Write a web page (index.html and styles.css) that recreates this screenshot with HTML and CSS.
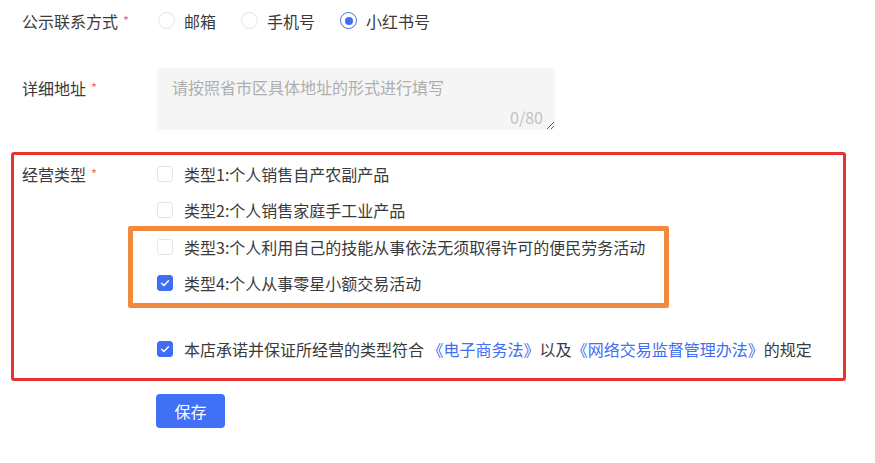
FILE: index.html
```html
<!DOCTYPE html>
<html lang="zh-CN">
<head>
    <meta charset="UTF-8">
    <meta name="viewport" content="width=device-width, initial-scale=1.0">
    <title>店铺信息</title>
    <link rel="stylesheet" href="styles.css">
</head>
<body>
    <div class="page">
        <div class="form-item contact-row">
            <div class="label">公示联系方式<span class="req">*</span></div>
            <div class="radio-group">
                <label class="radio"><span class="radio-dot"></span>邮箱</label>
                <label class="radio"><span class="radio-dot"></span>手机号</label>
                <label class="radio"><span class="radio-dot checked"></span>小红书号</label>
            </div>
        </div>

        <div class="form-item address-row">
            <div class="label">详细地址<span class="req">*</span></div>
            <div class="textarea-wrap">
                <textarea class="textarea" placeholder="请按照省市区具体地址的形式进行填写"></textarea>
                <span class="counter">0/80</span>
            </div>
        </div>

        <div class="form-item type-row">
            <div class="label">经营类型<span class="req">*</span></div>
            <div class="check-list">
                <label class="check"><span class="box"></span>类型1:个人销售自产农副产品</label>
                <label class="check"><span class="box"></span>类型2:个人销售家庭手工业产品</label>
                <label class="check"><span class="box"></span>类型3:个人利用自己的技能从事依法无须取得许可的便民劳务活动</label>
                <label class="check"><span class="box checked"><svg viewBox="0 0 16 16" width="16" height="16"><path d="M4.5 8.2l2.4 2.4 4.6-4.8" fill="none" stroke="#fff" stroke-width="1.4" stroke-linecap="round" stroke-linejoin="round"/></svg></span>类型4:个人从事零星小额交易活动</label>
                <label class="check agree"><span class="box checked"><svg viewBox="0 0 16 16" width="16" height="16"><path d="M4.5 8.2l2.4 2.4 4.6-4.8" fill="none" stroke="#fff" stroke-width="1.4" stroke-linecap="round" stroke-linejoin="round"/></svg></span>本店承诺并保证所经营的类型符合&nbsp;<a class="link" href="#">《电子商务法》</a>以及<a class="link" href="#">《网络交易监督管理办法》</a>的规定</label>
            </div>
        </div>

        <div class="actions">
            <button class="save-button">保存</button>
        </div>

        <!-- annotation frames drawn over the form -->
        <div class="mark mark-red"></div>
        <div class="mark mark-orange"></div>
    </div>
</body>
</html>
```

FILE: styles.css
```css
body {
    margin: 0;
    background: #fff;
    color: #3a3a3a;
    font-family: "Noto Sans CJK SC", "Noto Sans", sans-serif;
    font-size: 16px;
}
.page {
    position: relative;
    padding-left: 22px;
    height: 463px;
}
.form-item {
    display: flex;
    align-items: flex-start;
}
.label {
    width: 135px;
    flex-shrink: 0;
    line-height: 24px;
}
.req {
    color: #f56c6c;
    font-size: 13px;
    margin-left: 5px;
    vertical-align: top;
}
.contact-row {
    height: 41px;
    align-items: center;
}
.radio-group {
    display: flex;
    align-items: center;
}
.radio {
    display: flex;
    align-items: center;
    margin-right: 24px;
    line-height: 24px;
}
.radio-dot {
    width: 15px;
    height: 15px;
    border: 1px solid #e1e3e8;
    border-radius: 50%;
    margin: 0 9px 0 1px;
    position: relative;
}
.radio-dot.checked {
    border-color: #3d6ef5;
}
.radio-dot.checked::after {
    content: "";
    position: absolute;
    left: 3.5px;
    top: 3.5px;
    width: 8px;
    height: 8px;
    border-radius: 50%;
    background: #3d6ef5;
}
.address-row {
    margin-top: 27px;
}
.address-row .label {
    padding-top: 8px;
}
.textarea-wrap {
    position: relative;
    width: 398px;
    height: 62px;
}
.textarea {
    box-sizing: border-box;
    width: 398px;
    height: 62px;
    border: none;
    border-radius: 4px;
    background: #f5f5f6;
    padding: 7px 15px;
    font-family: inherit;
    font-size: 16px;
    line-height: 24px;
    color: #333;
    outline: none;
    resize: both;
}
.textarea::placeholder {
    color: #aeaeae;
}
.counter {
    position: absolute;
    right: 12px;
    bottom: 1px;
    color: #c2c2c2;
    line-height: 24px;
}
.type-row {
    margin-top: 26px;
}
.type-row .label {
    line-height: 36px;
}
.check-list {
    display: flex;
    flex-direction: column;
}
.check {
    display: flex;
    align-items: center;
    height: 36.3px;
    line-height: 24px;
}
.box {
    box-sizing: border-box;
    width: 16px;
    height: 16px;
    border: 1px solid #e3e4e8;
    border-radius: 3px;
    margin-right: 11px;
    display: flex;
}
.box.checked {
    background: #3d6ef5;
    border-color: #3d6ef5;
}
.box svg {
    margin: -1px;
}
.agree {
    margin-top: 30px;
}
.link {
    color: #3d6ef5;
    text-decoration: none;
}
.actions {
    margin-top: 27px;
    padding-left: 134px;
}
.save-button {
    width: 69px;
    height: 34px;
    border: none;
    border-radius: 4px;
    background: #4070f5;
    color: #fff;
    font-family: inherit;
    font-size: 16px;
    cursor: pointer;
}
.mark {
    position: absolute;
    box-sizing: border-box;
    pointer-events: none;
}
.mark-red {
    left: 11px;
    top: 152px;
    width: 835px;
    height: 229px;
    border: 3px solid #e8332c;
    border-radius: 3px;
}
.mark-orange {
    left: 128px;
    top: 226px;
    width: 541px;
    height: 82px;
    border: 5px solid #f28a3d;
    border-radius: 2px;
}
```
